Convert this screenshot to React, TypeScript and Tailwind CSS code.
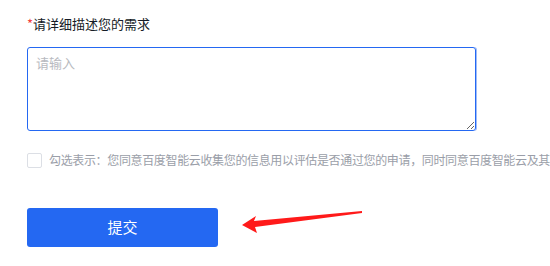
export default function App() {
  return (
    <div className="relative h-[266px] w-[550px] overflow-hidden bg-white font-['Noto_Sans_CJK_SC','Noto_Sans',sans-serif]">
      <div className="flex flex-col pl-[27px] pt-[15px]">
        {/* Label */}
        <label className="text-[13px] leading-[18px] text-[#151b26]">
          <span className="text-[#f33e3e]">*</span>请详细描述您的需求
        </label>

        {/* Textarea */}
        <textarea
          placeholder="请输入"
          className="mt-[14px] h-[84px] w-[449px] rounded-[3px] border border-[#2468f2] px-[8px] py-[5px] text-[13px] leading-[20px] text-[#151b26] shadow-[1px_0_0_#9fbcf8] outline-none placeholder:text-[#b8bac0]"
        />

        {/* Agreement */}
        <div className="mt-[21px] flex items-center gap-[7px] whitespace-nowrap">
          <span className="h-[15px] w-[15px] shrink-0 rounded-[2px] border border-[#dcdfe5] bg-white" />
          <span className="text-[12px] leading-[16px] tracking-[-0.35px] text-[#9a9ea8]">
            勾选表示：您同意百度智能云收集您的信息用以评估是否通过您的申请，同时同意百度智能云及其授权的合作伙伴与您联系
          </span>
        </div>

        {/* Submit */}
        <button className="mt-[40px] flex h-[39px] w-[191px] items-center justify-center rounded-[3px] bg-[#2468f2] text-[15px] text-white">
          提交
        </button>
      </div>

      {/* Annotation arrow */}
      <svg
        className="absolute left-[238px] top-[205px]"
        width="130"
        height="32"
        viewBox="0 0 130 32"
      >
        <path
          d="M4 20 L18 11 L16 16 L124 6 L124 8 L17 22 L19 28 Z"
          fill="#ff1a1a"
        />
      </svg>
    </div>
  );
}
